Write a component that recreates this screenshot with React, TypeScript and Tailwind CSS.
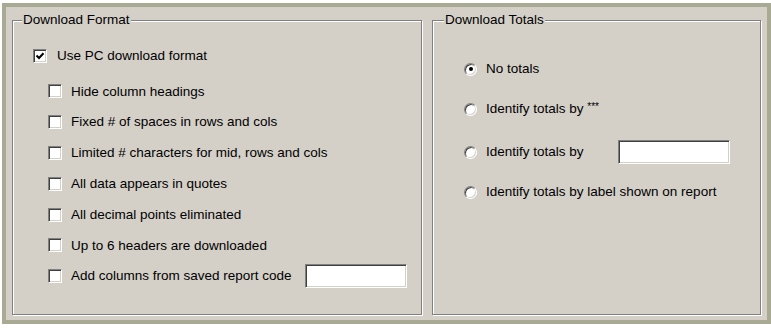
import React from 'react';

const face = 'bg-[#d4d0c8]';

const leftOptions = [
  'Hide column headings',
  'Fixed # of spaces in rows and cols',
  'Limited # characters for mid, rows and cols',
  'All data appears in quotes',
  'All decimal points eliminated',
  'Up to 6 headers are downloaded',
];

const Checkbox = ({ checked = false }: { checked?: boolean }) => (
  <span className="w-[14px] h-[14px] shrink-0 bg-white border border-t-[#808080] border-l-[#808080] border-b-white border-r-white shadow-[inset_1px_1px_0_#404040,inset_-1px_-1px_0_#d4d0c8] flex items-center justify-center">
    {checked && (
      <svg width="10" height="10" viewBox="0 0 10 10">
        <path d="M1.5 4.5 L4 7 L8.5 2.2" fill="none" stroke="#000" strokeWidth="2" />
      </svg>
    )}
  </span>
);

const Radio = ({ checked = false }: { checked?: boolean }) => (
  <span className="w-[13px] h-[13px] shrink-0 rounded-full bg-white border border-t-[#808080] border-l-[#808080] border-b-white border-r-white shadow-[inset_1px_1px_0_#404040,inset_-1px_-1px_0_#d4d0c8] flex items-center justify-center">
    {checked && <span className="w-[4px] h-[4px] rounded-full bg-black" />}
  </span>
);

const TextBox = ({ w }: { w: string }) => (
  <span className={`${w} h-[24px] shrink-0 bg-white border border-t-[#808080] border-l-[#808080] border-b-white border-r-white shadow-[inset_1px_1px_0_#404040,inset_-1px_-1px_0_#d4d0c8]`} />
);

export default function App() {
  return (
    <div className="w-[771px] h-[328px] bg-white pl-[2px] pt-[3px] pb-[4px] font-['Liberation_Sans',Arial,sans-serif] text-[13.5px] text-black leading-none">
      <div className={`h-full border-[4px] border-[#a9aa94] ${face} flex gap-[10px] pl-[6px] pr-[6px] pt-[5px] pb-[5px]`}>

        {/* Download Format */}
        <fieldset className="w-[410px] h-full border border-[#808080] shadow-[1px_1px_0_#fff,inset_1px_1px_0_#fff]">
          <legend className={`ml-[9px] px-[1px] ${face} h-[16px] leading-[16px]`}>Download Format</legend>
          <div className="pl-[20px] pt-[12px]">
            <div className="h-[31px] flex items-center gap-[10px]">
              <Checkbox checked />
              <span>Use PC download format</span>
            </div>
            <div className="mt-[5px] pl-[15px] flex flex-col">
              {leftOptions.map((o, i) => (
                <div key={i} className="h-[30.8px] flex items-center gap-[9px]">
                  <Checkbox />
                  <span>{o}</span>
                </div>
              ))}
              <div className="h-[30.8px] flex items-center gap-[9px]">
                <Checkbox />
                <span className="w-[225px]">Add columns from saved report code</span>
                <TextBox w="w-[102px]" />
              </div>
            </div>
          </div>
        </fieldset>

        {/* Download Totals */}
        <fieldset className="flex-1 h-full border border-[#808080] shadow-[1px_1px_0_#fff,inset_1px_1px_0_#fff]">
          <legend className={`ml-[11px] px-[1px] ${face} h-[16px] leading-[16px]`}>Download Totals</legend>
          <div className="pl-[31px] pt-[30px]">
            <div className="h-[22px] flex items-center gap-[9px]">
              <Radio checked />
              <span>No totals</span>
            </div>
            <div className="mt-[18px] h-[22px] flex items-center gap-[9px]">
              <Radio />
              <span>
                Identify totals by <span className="text-[10px] align-top">***</span>
              </span>
            </div>
            <div className="mt-[20px] h-[24px] flex items-center gap-[9px]">
              <Radio />
              <span className="w-[123px]">Identify totals by</span>
              <TextBox w="w-[112px]" />
            </div>
            <div className="mt-[17px] h-[22px] flex items-center gap-[9px]">
              <Radio />
              <span>Identify totals by label shown on report</span>
            </div>
          </div>
        </fieldset>

      </div>
    </div>
  );
}
